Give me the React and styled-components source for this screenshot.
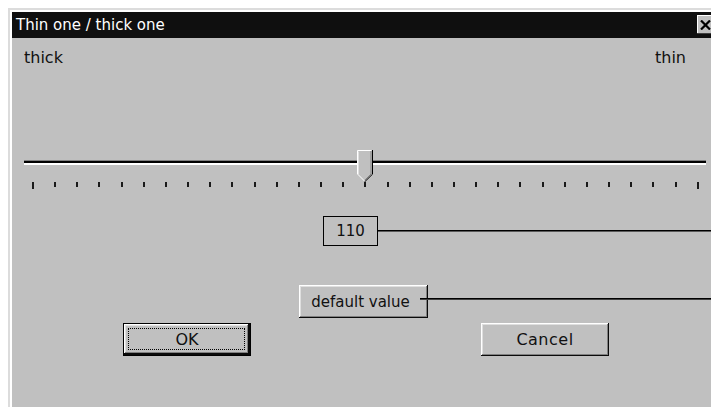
import React from "react";
import styled, { createGlobalStyle } from "styled-components";

const GlobalStyle = createGlobalStyle`
  html, body {
    margin: 0;
    padding: 0;
    background: #fff;
    width: 711px;
    height: 407px;
    overflow: hidden;
  }
  * { box-sizing: border-box; }
`;

const Frame = styled.div`
  margin: 8px 0 0 8px;
  padding: 2px 0 0 2px;
  border-top: 2px solid #dcdcdc;
  border-left: 2px solid #dcdcdc;
`;

const Window = styled.div`
  width: 703px;
  height: 395px;
  background: #c0c0c0;
  display: flex;
  flex-direction: column;
  font-family: "DejaVu Sans", "Liberation Sans", sans-serif;
  color: #111;
`;

const TitleBar = styled.div`
  height: 26px;
  flex: none;
  background: #0f0f0f;
  color: #fff;
  display: flex;
  justify-content: space-between;
  align-items: flex-start;
  padding-left: 4px;
`;

const TitleText = styled.span`
  font-size: 15px;
  line-height: 26px;
`;

const CloseButton = styled.div`
  width: 17px;
  height: 19px;
  margin: 3px 1px 0 0;
  background: #c0c0c0;
  box-shadow: inset -1px -1px #404040, inset 1px 1px #fff;
  display: flex;
  align-items: center;
  justify-content: center;
`;

const LabelRow = styled.div`
  display: flex;
  justify-content: space-between;
  padding: 12px 29px 0 12px;
  font-size: 16px;
  line-height: 16px;
`;

const Slider = styled.div`
  position: relative;
  width: 682px;
  margin: 94px 0 0 12px;
`;

const Track = styled.div`
  height: 5px;
  border-top: 1px solid #808080;
  border-bottom: 2px solid #fff;
  background: #000;
`;

const Thumb = styled.svg`
  position: absolute;
  left: 333px;
  top: -10px;
`;

const Ticks = styled.div`
  display: flex;
  justify-content: space-between;
  align-items: flex-start;
  height: 8px;
  margin-top: 17px;
  padding: 0 7px 0 8px;
`;

const Tick = styled.div`
  width: 2px;
  height: ${(p) => (p.$long ? 7 : 5)}px;
  background: #1a1a1a;
`;

const ValueRow = styled.div`
  display: flex;
  align-items: center;
  margin-top: 26px;
  padding-left: 311px;
`;

const ValueBox = styled.div`
  width: 55px;
  height: 30px;
  border: 1px solid #000;
  font-size: 15px;
  line-height: 28px;
  text-align: center;
`;

const Lead = styled.div`
  flex: 1;
  height: 2px;
  border-top: 1px solid #000;
  background: ${(p) => p.$shade || "#555"};
  margin-left: ${(p) => p.$overlap || 0}px;
  margin-top: ${(p) => p.$top || 0}px;
  align-self: ${(p) => (p.$top ? "flex-start" : "auto")};
  position: relative;
  z-index: 1;
`;

const DefaultRow = styled.div`
  display: flex;
  margin-top: 39px;
  padding-left: 287px;
`;

const ButtonRow = styled.div`
  display: flex;
  margin-top: 5px;
  padding-left: 111px;
`;

const Button = styled.div`
  position: relative;
  flex: none;
  width: ${(p) => p.$w}px;
  height: 33px;
  margin-left: ${(p) => p.$ml || 0}px;
  padding-right: ${(p) => p.$pr || 0}px;
  background: #c0c0c0;
  font-size: ${(p) => p.$fs || 16}px;
  letter-spacing: ${(p) => p.$ls || 0}px;
  display: flex;
  align-items: center;
  justify-content: center;
  box-shadow: inset -1px -1px #0a0a0a, inset 1px 1px #fff,
    inset -2px -2px #808080, inset 2px 2px #dfdfdf;
  ${(p) =>
    p.$default &&
    `
    border: 1px solid #000;
    box-shadow: inset -2px -2px #0a0a0a, inset 1px 1px #fff,
      inset -3px -3px #808080, inset 2px 2px #dfdfdf;
    &::after {
      content: "";
      position: absolute;
      inset: 4px 5px 5px 4px;
      border: 1px dotted #000;
    }
  `}
`;

const tickCount = 31;

export default function App() {
  return (
    <>
      <GlobalStyle />
      <Frame>
        <Window>
          <TitleBar>
            <TitleText>Thin one / thick one</TitleText>
            <CloseButton>
              <svg width="11" height="10" viewBox="0 0 11 10">
                <path d="M1 0.5 L10 9.5 M10 0.5 L1 9.5" stroke="#000" strokeWidth="2.2" />
              </svg>
            </CloseButton>
          </TitleBar>
          <LabelRow>
            <span>thick</span>
            <span>thin</span>
          </LabelRow>
          <Slider>
            <Track />
            <Thumb width="16" height="32" viewBox="0 0 16 32">
              <polygon points="0,0 15,0 15,24 7.5,31.5 0,24" fill="#c0c0c0" />
              <polyline points="0.5,24 0.5,0.5 14.5,0.5" fill="none" stroke="#fff" />
              <polyline points="1.5,24 1.5,1.5" fill="none" stroke="#dfdfdf" />
              <polyline points="14,1 14,24 7.5,30.5" fill="none" stroke="#808080" />
              <polyline points="15.5,0 15.5,24.2 7.5,32" fill="none" stroke="#000" />
              <line x1="0.5" y1="24" x2="7.5" y2="31" stroke="#fff" />
            </Thumb>
            <Ticks>
              {Array.from({ length: tickCount }, (_, i) => (
                <Tick key={i} $long={i === 0 || i === tickCount - 1} />
              ))}
            </Ticks>
          </Slider>
          <ValueRow>
            <ValueBox>110</ValueBox>
            <Lead $shade="#5a5a5a" />
          </ValueRow>
          <DefaultRow>
            <Button $w={129} $fs={15} $pr={6}>default value</Button>
            <Lead $overlap={-8} $top={13} $shade="#404040" />
          </DefaultRow>
          <ButtonRow>
            <Button $w={128} $default>OK</Button>
            <Button $w={128} $ml={230} $ls={0.5}>Cancel</Button>
          </ButtonRow>
        </Window>
      </Frame>
    </>
  );
}
